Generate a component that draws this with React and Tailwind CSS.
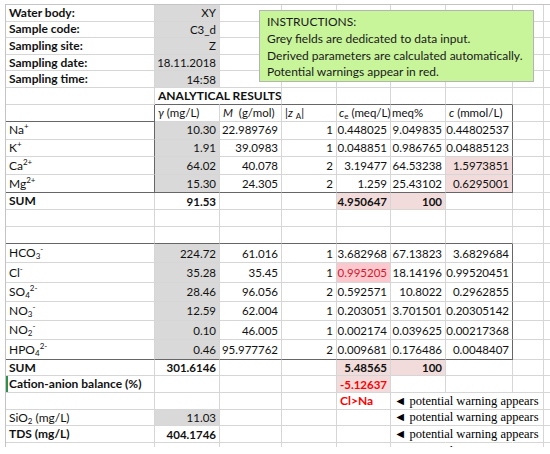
import React from "react";

const W = [
  "w-[149px]",
  "w-[65px]",
  "w-[62px]",
  "w-[55px]",
  "w-[54px]",
  "w-[55px]",
  "w-[67px]",
  "w-[31px]",
  "w-[80px]",
];

const g = "bg-[#d9d9d9]";
const p = "bg-[#f2dcdb]";
const hd = "text-[11.5px]";

const Sub = ({ children }) => (
  <sub className="text-[8px] bottom-[-2px]">{children}</sub>
);
const Sup = ({ children }) => (
  <sup className="text-[8px] top-[-5px]">{children}</sup>
);

const Warn = () => (
  <span className="font-['Liberation_Serif',serif] text-[12.5px] font-normal text-black">
    ◄ potential warning appears
  </span>
);

const Cell = ({ col, c }) => {
  const right = c.dr
    ? "border-r-[#666666]"
    : c.hr
    ? "border-r-transparent"
    : "border-r-[#d6d6d6]";
  const bottom = c.db ? "border-b-[#666666]" : "border-b-[#d6d6d6]";
  return (
    <div
      className={`${W[col]} shrink-0 h-full border-r border-b ${right} ${bottom} ${
        c.bg || ""
      } ${c.r ? "justify-end text-[11.5px]" : "justify-start"} ${
        c.b ? "font-bold" : ""
      } flex items-center px-[3px] whitespace-nowrap ${c.cls || ""}`}
    >
      {c.t !== undefined && <span>{c.t}</span>}
    </div>
  );
};

const Row = ({ h, cells }) => (
  <div className={`flex ${h}`}>
    {W.map((_, i) => (
      <Cell key={i} col={i} c={cells[i] || {}} />
    ))}
  </div>
);

// numeric cell, right aligned
const n = (t, extra = {}) => ({ t, r: 1, ...extra });

const rows = [
  { h: "h-[16.6px]", cells: [{ t: "Water body:", b: 1 }, n("XY", { bg: g })] },
  { h: "h-[16.6px]", cells: [{ t: "Sample code:", b: 1 }, n("C3_d", { bg: g })] },
  { h: "h-[16.6px]", cells: [{ t: "Sampling site:", b: 1 }, n("Z", { bg: g })] },
  { h: "h-[16.6px]", cells: [{ t: "Sampling date:", b: 1 }, n("18.11.2018", { bg: g })] },
  { h: "h-[16.6px]", cells: [{ t: "Sampling time:", b: 1 }, n("14:58", { bg: g })] },
  {
    h: "h-[16.6px]",
    cells: [
      {},
      { t: "ANALYTICAL RESULTS", b: 1, hr: 1, db: 1 },
      { db: 1 },
      { db: 1 },
      { db: 1 },
      { db: 1 },
      { db: 1 },
    ],
  },
  {
    h: "h-[17.1px]",
    cells: [
      { db: 1, dr: 1 },
      { t: <><i>γ</i> (mg/L)</>, cls: hd },
      { t: <><i>M</i>&nbsp; (g/mol)</>, cls: hd },
      { t: <>|<i>z</i> <Sub>A</Sub>|</>, cls: hd },
      { t: <><i>c</i><Sub>e</Sub> (meq/L)</>, cls: `${hd} pl-[2px]` },
      { t: "meq%", cls: `${hd} pl-[1px]` },
      { t: <><i>c</i> (mmol/L)</>, dr: 1, cls: hd },
    ],
  },
  {
    h: "h-[17.9px]",
    cells: [
      { t: <>Na<Sup>+</Sup></>, dr: 1 },
      n("10.30", { bg: g }),
      n("22.989769"),
      n("1"),
      n("0.448025"),
      n("9.049835"),
      n("0.44802537", { dr: 1 }),
    ],
  },
  {
    h: "h-[17.9px]",
    cells: [
      { t: <>K<Sup>+</Sup></>, dr: 1 },
      n("1.91", { bg: g }),
      n("39.0983"),
      n("1"),
      n("0.048851"),
      n("0.986765"),
      n("0.04885123", { dr: 1 }),
    ],
  },
  {
    h: "h-[17.9px]",
    cells: [
      { t: <>Ca<Sup>2+</Sup></>, dr: 1 },
      n("64.02", { bg: g }),
      n("40.078"),
      n("2"),
      n("3.19477"),
      n("64.53238"),
      n("1.5973851", { dr: 1, bg: p }),
    ],
  },
  {
    h: "h-[17.9px]",
    cells: [
      { t: <>Mg<Sup>2+</Sup></>, dr: 1, db: 1 },
      n("15.30", { bg: g, db: 1 }),
      n("24.305", { db: 1 }),
      n("2", { db: 1 }),
      n("1.259", { db: 1 }),
      n("25.43102", { db: 1 }),
      n("0.6295001", { dr: 1, bg: p, db: 1 }),
    ],
  },
  {
    h: "h-[17px]",
    cells: [
      { t: "SUM", b: 1 },
      n("91.53", { b: 1 }),
      {},
      {},
      n("4.950647", { b: 1, bg: p }),
      n("100", { b: 1, bg: p }),
    ],
  },
  { h: "h-[17px]", cells: [] },
  {
    h: "h-[17px]",
    cells: [{ db: 1 }, { db: 1 }, { db: 1 }, { db: 1 }, { db: 1 }, { db: 1 }, { db: 1 }],
  },
  {
    h: "h-[19.25px]",
    cells: [
      { t: <>HCO<Sub>3</Sub><Sup>-</Sup></> },
      n("224.72", { bg: g }),
      n("61.016"),
      n("1"),
      n("3.682968"),
      n("67.13823"),
      n("3.6829684", { dr: 1 }),
    ],
  },
  {
    h: "h-[19.25px]",
    cells: [
      { t: <>Cl<Sup>-</Sup></> },
      n("35.28", { bg: g }),
      n("35.45"),
      n("1"),
      n("0.995205", { bg: "bg-[#fbc8cd]", cls: "text-[#d0182f]" }),
      n("18.14196"),
      n("0.99520451", { dr: 1 }),
    ],
  },
  {
    h: "h-[19.25px]",
    cells: [
      { t: <>SO<Sub>4</Sub><Sup>2-</Sup></> },
      n("28.46", { bg: g }),
      n("96.056"),
      n("2"),
      n("0.592571"),
      n("10.8022"),
      n("0.2962855", { dr: 1 }),
    ],
  },
  {
    h: "h-[19.25px]",
    cells: [
      { t: <>NO<Sub>3</Sub><Sup>-</Sup></> },
      n("12.59", { bg: g }),
      n("62.004"),
      n("1"),
      n("0.203051"),
      n("3.701501"),
      n("0.20305142", { dr: 1 }),
    ],
  },
  {
    h: "h-[19.25px]",
    cells: [
      { t: <>NO<Sub>2</Sub><Sup>-</Sup></> },
      n("0.10", { bg: g }),
      n("46.005"),
      n("1"),
      n("0.002174"),
      n("0.039625"),
      n("0.00217368", { dr: 1 }),
    ],
  },
  {
    h: "h-[19.25px]",
    cells: [
      { t: <>HPO<Sub>4</Sub><Sup>2-</Sup></>, db: 1 },
      n("0.46", { bg: g, db: 1 }),
      n("95.977762", { db: 1 }),
      n("2", { db: 1 }),
      n("0.009681", { db: 1 }),
      n("0.176486", { db: 1 }),
      n("0.0048407", { dr: 1, db: 1 }),
    ],
  },
  {
    h: "h-[16.7px]",
    cells: [
      { t: "SUM", b: 1 },
      n("301.6146", { b: 1 }),
      {},
      {},
      n("5.48565", { b: 1, bg: p }),
      n("100", { b: 1, bg: p }),
    ],
  },
  {
    h: "h-[16.7px]",
    cells: [
      { t: "Cation-anion balance (%)", b: 1, cls: "shadow-[inset_2px_0_0_#2f8f4e]" },
      {},
      {},
      {},
      n("-5.12637", { b: 1, bg: p, cls: "text-[#ff0000]" }),
    ],
  },
  {
    h: "h-[16.7px]",
    cells: [
      {},
      {},
      {},
      {},
      { t: "Cl>Na", b: 1, cls: "text-[#ff0000]" },
      { t: <Warn />, hr: 1 },
      { hr: 1 },
    ],
  },
  {
    h: "h-[16.7px]",
    cells: [
      { t: <>SiO<Sub>2</Sub> (mg/L)</> },
      n("11.03", { bg: g }),
      {},
      {},
      {},
      { t: <Warn />, hr: 1 },
      { hr: 1 },
    ],
  },
  {
    h: "h-[16.7px]",
    cells: [
      { t: "TDS (mg/L)", b: 1 },
      n("404.1746", { b: 1 }),
      {},
      {},
      {},
      { t: <Warn />, hr: 1 },
      { hr: 1 },
    ],
  },
  {
    h: "h-[16.7px]",
    cells: [{}, {}, {}, {}, {}, { t: <Warn />, hr: 1 }, { hr: 1 }],
  },
];

export default function App() {
  return (
    <div className="w-[550px] h-[454px] bg-white overflow-hidden font-[Lato,sans-serif] text-[12px] text-[#111]">
      <div className="relative ml-[5px] mt-[4px] w-[545px] h-[443px] overflow-hidden border-l border-t border-[#c4c4c4]">
        {rows.map((r, i) => (
          <Row key={i} h={r.h} cells={r.cells} />
        ))}

        <div className="absolute left-[253px] top-[5px] w-[275px] h-[72px] bg-[#c8f49a] border border-[#b4b4b4] pl-[7px] pt-[3px] leading-[16.8px] text-[12px] text-[#1a1a1a]">
          <p>INSTRUCTIONS:</p>
          <p>Grey fields are dedicated to data input.</p>
          <p>Derived parameters are calculated automatically.</p>
          <p>Potential warnings appear in red.</p>
        </div>
      </div>
    </div>
  );
}
